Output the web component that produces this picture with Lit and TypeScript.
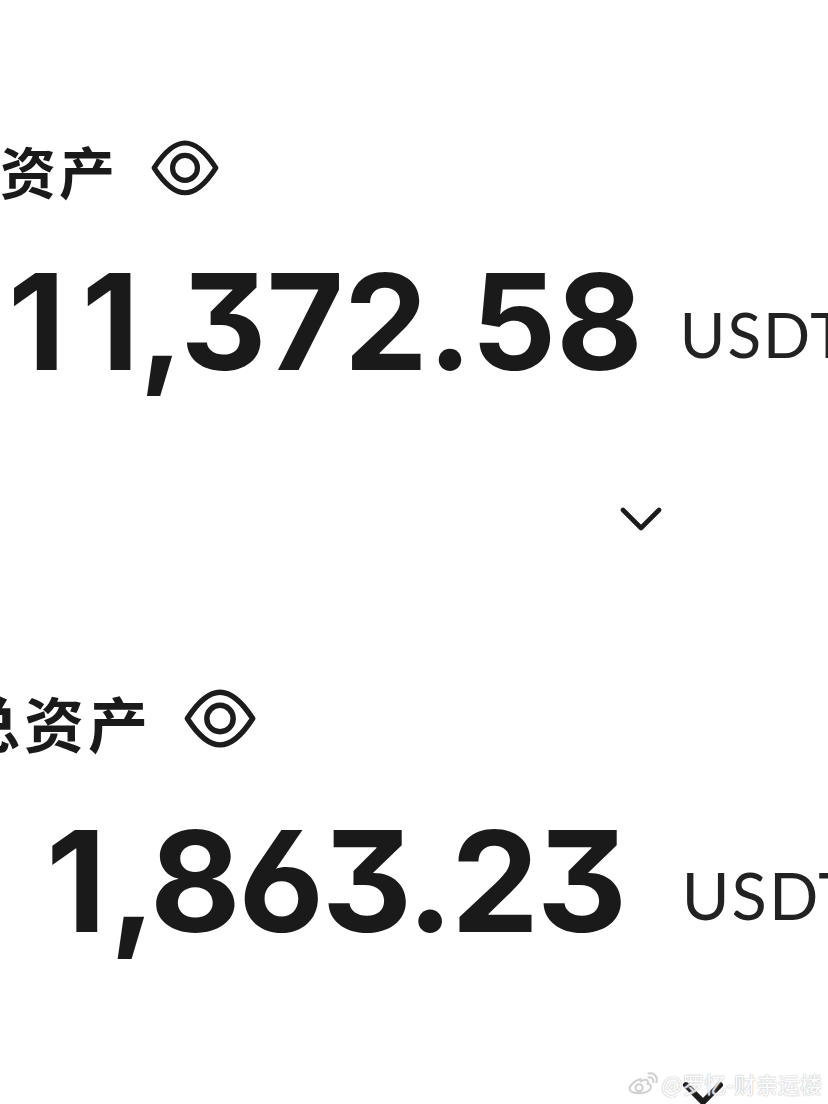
import { LitElement, html, css } from 'lit';
import { customElement } from 'lit/decorators.js';

const eye = (w: number) => html`
  <svg class="eye" width=${w} height=${w * 0.82} viewBox="0 0 68 56" fill="none" stroke="#1c1c1c" stroke-width="5.2">
    <path d="M3 28 C12 14 22 3 34 3 C46 3 56 14 65 28 C56 42 46 53 34 53 C22 53 12 42 3 28 Z" stroke-linejoin="round" />
    <circle cx="34" cy="28" r="12.5" />
  </svg>
`;

@customElement('app-root')
export class AppRoot extends LitElement {
  static styles = css`
    :host {
      display: block;
      position: relative;
      width: 828px;
      height: 1104px;
      overflow: hidden;
      background: #fff;
      color: #1a1a1a;
    }
    .label {
      display: flex;
      align-items: center;
      font-family: "Noto Sans CJK SC", sans-serif;
      font-weight: 700;
      white-space: nowrap;
      line-height: 1;
    }
    .label-top {
      padding-top: 140px;
      margin-left: -59px;
      font-size: 56px;
      letter-spacing: 3px;
      gap: 33px;
    }
    .label-bottom {
      margin-top: 157px;
      margin-left: -40px;
      font-size: 60px;
      letter-spacing: 4px;
      gap: 32px;
    }
    .amount {
      display: flex;
      align-items: flex-end;
      white-space: nowrap;
      font-family: Inter, sans-serif;
      font-weight: 700;
      line-height: 1;
      font-feature-settings: "ss01", "cv03", "cv09";
    }
    .amount-top {
      margin-top: 54px;
      margin-left: 8px;
      font-size: 133px;
      letter-spacing: 0;
      gap: 37px;
    }
    .amount-top .wide {
      letter-spacing: 16.5px;
    }
    .amount-bottom {
      margin-top: 55px;
      margin-left: 46px;
      font-size: 140px;
      letter-spacing: -2.5px;
      gap: 57px;
    }
    .amount-bottom .wide {
      letter-spacing: 3px;
    }
    .unit {
      font-family: Lato, sans-serif;
      font-weight: 400;
      font-size: 62px;
      letter-spacing: 2px;
      line-height: 1;
      padding-bottom: 23px;
      color: #222;
    }
    .amount-bottom .unit {
      font-size: 65px;
      letter-spacing: 2px;
      padding-bottom: 23px;
    }
    .chev {
      display: flex;
      justify-content: flex-end;
    }
    .chev-top {
      padding: 118px 166px 0 0;
    }
    .chev-bottom {
      padding: 130px 104px 0 0;
    }
    .watermark {
      position: absolute;
      right: 6px;
      bottom: 9px;
      display: flex;
      align-items: center;
      gap: 4px;
      font-family: "Noto Sans CJK SC", sans-serif;
      font-size: 22px;
      line-height: 1;
      color: #fff;
      text-shadow: 0 0 2px #bbb, 0 0 1px #aaa;
      opacity: 0.85;
    }
    .eye {
      display: block;
      flex: none;
      margin-bottom: 5px;
    }
    .label-bottom .eye {
      margin-bottom: 8px;
    }
  `;

  render() {
    return html`
      <div class="label label-top"><span>总资产</span>${eye(68)}</div>
      <div class="amount amount-top"><span><span class="wide">1</span>1,372.58</span><span class="unit">USDT</span></div>
      <div class="chev chev-top">
        <svg width="42" height="26" viewBox="0 0 42 26" fill="none" stroke="#1c1c1c" stroke-width="4.6" stroke-linecap="round" stroke-linejoin="round"><path d="M3 4 L21 22 L39 4" /></svg>
      </div>
      <div class="label label-bottom"><span>总资产</span>${eye(72)}</div>
      <div class="amount amount-bottom"><span><span class="wide">1</span>,863.23</span><span class="unit">USDT</span></div>
      <div class="chev chev-bottom">
        <svg width="42" height="28" viewBox="0 0 42 28" fill="none" stroke="#1c1c1c" stroke-width="6" stroke-linecap="round" stroke-linejoin="round"><path d="M4 4 L21 21 L38 4" /></svg>
      </div>
      <div class="watermark">
        <svg width="30" height="24" viewBox="0 0 38 30" fill="none" stroke="#c8c8c8" stroke-width="2.6" stroke-linecap="round">
          <path d="M16 10 C8 12 2 18 2 22 C2 26 8 28 15 28 C23 28 29 24 29 20 C29 17 26 16 25 16 C26 13 25 11 22 11 C20 11 18 12 16 13" />
          <circle cx="14" cy="21" r="4.5" />
          <path d="M26 8 C30 7 33 10 32 14 M26 3 C33 1 38 7 36 14" />
        </svg>
        <span>@罗忆-财亲运楼</span>
      </div>
    `;
  }
}

declare global {
  interface HTMLElementTagNameMap {
    'app-root': AppRoot;
  }
}
